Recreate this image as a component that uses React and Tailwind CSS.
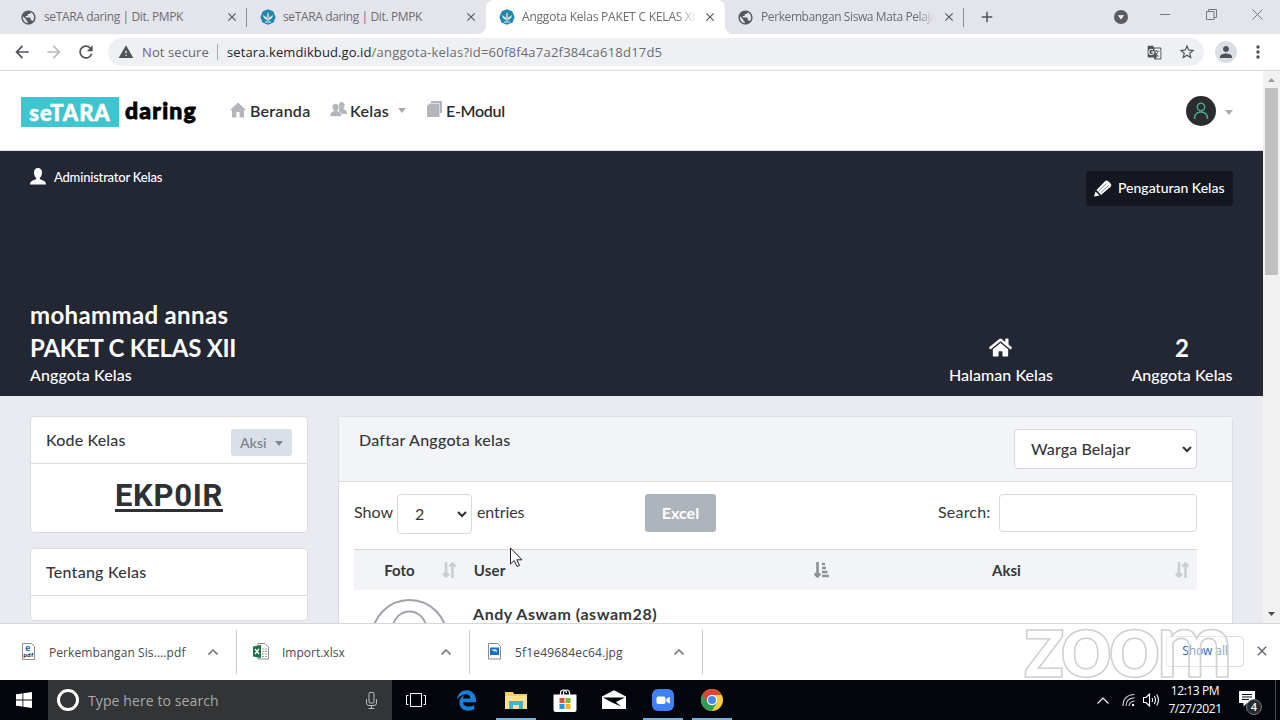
import React from "react";
import {
    MdPublic, MdClose, MdAdd, MdArrowBack, MdArrowForward, MdRefresh, MdWarning,
    MdGTranslate, MdStarBorder, MdPerson, MdMoreVert,
} from "react-icons/md";
import { FaHome } from "react-icons/fa";
import { FaEdgeLegacy } from "react-icons/fa6";

/* ---------- Chrome ---------- */

const KemdikbudIcon = () => (
    <svg width="16" height="16" viewBox="0 0 16 16">
        <path d="M8 .3l5.200 2L15.600 8l-2 5.400L8 15.700l-5.600-2.300L.4 8l2.400-5.700z" fill="#1f86ae" />
        <path d="M2.800 6l4 2.500L7 5.500 8 3l1 2.500.2 3L13.200 6q-.5 3.500-3.200 4.500L8 12l-2-1.500Q3.300 9.500 2.800 6z" fill="#cfe8f1" />
        <path d="M8 4v7" stroke="#c98a6a" strokeWidth="1" />
        <path d="M5 13h6" stroke="#e9f4f7" strokeWidth="1" />
    </svg>
);

const tabs = [
    { title: "seTARA daring | Dit. PMPK", icon: "globe", tracking: "tracking-[-0.37px]" },
    { title: "seTARA daring | Dit. PMPK", icon: "kemdikbud", tracking: "tracking-[-0.37px]" },
    { title: "Anggota Kelas PAKET C KELAS XII", icon: "kemdikbud", active: true, tracking: "tracking-[-0.2px]" },
    { title: "Perkembangan Siswa Mata Pelajaran", icon: "globe", tracking: "tracking-[-0.4px]" },
];

const Tab = ({ title, icon, active, tracking, divider }) => (
    <div className={`relative flex h-[34px] w-[239px] items-center pl-[12px] ${active ? "rounded-t-lg bg-white" : ""}`}>
        {active && (
            <>
                <svg className="absolute -left-[8px] bottom-0" width="8" height="8"><path d="M8 0v8H0a8 8 0 008-8z" fill="#fff" /></svg>
                <svg className="absolute -right-[8px] bottom-0" width="8" height="8"><path d="M0 0v8h8a8 8 0 01-8-8z" fill="#fff" /></svg>
            </>
        )}
        <span className="flex w-[17px] shrink-0 justify-center">
            {icon === "globe" ? <MdPublic size={17} className="text-[#55575d]" /> : <KemdikbudIcon />}
        </span>
        <span className={`ml-[7px] w-[175px] overflow-hidden whitespace-nowrap text-[12px] text-[#6b6d73] ${tracking} ${title.length > 26 ? "[mask-image:linear-gradient(to_right,#000_155px,transparent_175px)]" : ""}`}>
            {title}
        </span>
        <MdClose size={14} className="ml-[6px] shrink-0 text-[#55575d]" />
        {divider && <span className="absolute right-0 top-[8px] h-[19px] w-px bg-[#8c8e95]" />}
    </div>
);

const TabStrip = () => (
    <div className="flex h-[34px] items-center bg-[#e4e5eb] pl-[8px]">
        {tabs.map((tab, i) => (
            <Tab key={i} {...tab} divider={i === 0 || i === 3} />
        ))}
        <MdAdd size={18} className="ml-[14px] text-[#505258]" />
        <div className="ml-auto flex items-center pr-[17px] text-[#77797f]">
            <svg width="14" height="14" viewBox="0 0 14 14">
                <circle cx="7" cy="7" r="7" fill="#5a5c62" />
                <path d="M3.800 5.200h6.400L7 9.500z" fill="#fff" />
            </svg>
            <svg className="mb-[4px] ml-[32px]" width="10" height="12"><path d="M0 5.500h10" stroke="currentColor" /></svg>
            <svg className="mb-[5px] ml-[36px]" width="11" height="11" fill="none" stroke="currentColor">
                <path d="M.5 2.500h7.500v8H.5zM2.500 2.500v-2h8v8H8" />
            </svg>
            <svg className="mb-[5px] ml-[35px]" width="11" height="11" stroke="currentColor"><path d="M.5.5l10 10M10.500.5l-10 10" /></svg>
        </div>
    </div>
);

const Toolbar = () => (
    <div className="flex h-[37px] items-center border-b border-[#d6d7db] bg-white pl-[12px] pr-[12px] text-[#505258]">
        <MdArrowBack size={20} />
        <MdArrowForward size={20} className="ml-[12px] text-[#b9babd]" />
        <MdRefresh size={20} className="ml-[12px]" />
        <div className="ml-[12px] flex h-[28px] w-[1096px] items-center rounded-full bg-[#eff0f4] pl-[10px] pr-[9px] text-[14px]">
            <MdWarning size={16} />
            <span className="ml-[8px] w-[67px] whitespace-nowrap pt-px text-[13px] tracking-[0.1px] text-[#66686d]">Not secure</span>
            <span className="ml-[8px] h-[16px] w-px bg-[#a5a7ac]" />
            <span className="ml-[9px] whitespace-nowrap pt-px text-[13px] tracking-[0.22px] text-[#6a6c71]">
                <span className="tracking-[0.1px] text-[#222327]">setara.kemdikbud.go.id</span>/anggota-kelas?id=60f8f4a7a2f384ca618d17d5
            </span>
            <MdGTranslate size={15} className="ml-auto" />
            <MdStarBorder size={18} className="-mr-px ml-[16px]" />
        </div>
        <span className="ml-[11px] flex h-[22px] w-[22px] shrink-0 items-center justify-center rounded-full bg-[#dcdee5]">
            <MdPerson size={18} />
        </span>
        <MdMoreVert size={20} className="ml-[11px]" />
    </div>
);

/* ---------- Halaman ---------- */

const Caret = ({ className }) => (
    <svg className={className} width="8" height="5" viewBox="0 0 8 5" fill="currentColor"><path d="M0 0h8L4 5z" /></svg>
);

const Chevron = () => (
    <svg width="10" height="7" viewBox="0 0 10 7" fill="none" stroke="#303236" strokeWidth="2"><path d="M1 1l4 4 4-4" /></svg>
);

const Header = () => (
    <header className="flex h-[80px] items-center border-b border-[#d5dadd] bg-white pl-[21px] pr-[30px] text-[#2c2d30]">
        <span className="mt-[2px] flex h-[30px] w-[98px] items-center justify-center bg-[#3ec5d0] pt-px text-[22px] font-black tracking-[0.9px] text-white [-webkit-text-stroke:0.5px_#fff]">seTARA</span>
        <span className="ml-[6px] w-[73px] whitespace-nowrap text-[23px] font-black tracking-[1.2px] text-black [-webkit-text-stroke:0.8px_#000]">daring</span>
        <nav className="ml-[32px] flex items-center text-[16px] font-semibold">
            <svg className="mb-[2px]" width="16" height="16" viewBox="0 0 16 16" fill="#b4b6bc"><path d="M8 .5L16 8h-2v7.500H9.500V10h-3v5.500H2V8H0z" /></svg>
            <span className="ml-[4px] w-[60px] tracking-[0.25px]">Beranda</span>
            <svg className="mb-[2px] ml-[20px]" width="17" height="15" viewBox="0 0 17 15" fill="#b4b6bc">
                <path d="M11.500 0c2 0 3.200 1.300 3.200 3.200 0 1.300-.5 2.300-1.200 3v1c2.300.7 3.500 1.300 3.500 4.800h-5l-3-2V3C9 1 10 0 11.500 0z" />
                <path d="M5.500 1.500C7.700 1.500 9 2.900 9 5c0 1.400-.6 2.500-1.300 3.200v1c2.700.8 4.100 1.800 4.100 5.300H0c0-3.500 1.200-4.500 3.500-5.300v-1C2.700 7.500 2.100 6.400 2.100 5c0-2.100 1.300-3.500 3.400-3.500z" stroke="#fff" strokeWidth=".6" />
            </svg>
            <span className="ml-[3px] w-[40px] tracking-[0.3px]">Kelas</span>
            <Caret className="ml-[8px] text-[#a9abb0]" />
            <svg className="mb-[3px] ml-[21px]" width="15" height="16" viewBox="0 0 15 16">
                <path d="M4 0h11v12h-2V2H4z" fill="#b4b6bc" />
                <path d="M2.500 2.500h10V16H0V5z" fill="#b4b6bc" />
            </svg>
            <span className="ml-[4px] tracking-[-0.3px]">E-Modul</span>
        </nav>
        <span className="ml-auto flex h-[30px] w-[30px] items-center justify-center rounded-full bg-[#2b2c2f]">
            <svg width="16" height="18" viewBox="0 0 16 18" fill="none" stroke="#4aa590" strokeWidth="1.500">
                <circle cx="8" cy="5" r="3.700" />
                <path d="M1.500 17c0-4.500 2.500-7 6.500-7s6.500 2.500 6.500 7" />
            </svg>
        </span>
        <Caret className="ml-[9px] mt-[3px] text-[#a9abb0]" />
    </header>
);

const Hero = () => (
    <section className="flex h-[245px] flex-col justify-between bg-[#232733] pb-[10px] pl-[30px] pr-[30px] text-white">
        <div className="flex items-start justify-between">
            <div className="flex items-center pt-[15px] text-[13px]">
                <svg width="16" height="17" viewBox="0 0 16 17" fill="#fff">
                    <path d="M8 0c2.500 0 4 1.600 4 4.500C12 7 11 9 9.800 10v1.200c3 .9 6.200 1.800 6.200 5.300H0c0-3.500 3.200-4.400 6.200-5.300V10C5 9 4 7 4 4.500 4 1.600 5.500 0 8 0z" />
                </svg>
                <span className="ml-[8px] mt-[2px] font-medium tracking-[-0.2px]">Administrator Kelas</span>
            </div>
            <div className="mt-[20px] flex h-[35px] w-[147px] items-center rounded-[3px] bg-[#141720] pl-[8px] text-[14px] font-medium">
                <svg width="18" height="17" viewBox="0 0 18 17">
                    <path d="M11.500.8Q13 0 14.500 1.500l2 2Q18 5 16.800 6.500L7 15 2.500 10z" fill="#fff" />
                    <path d="M1.500 11.500l4 4L0 16.500z" fill="#fff" />
                    <path d="M4.500 11l8-7.500M6.500 13l8-7.500" stroke="#141720" strokeWidth=".5" />
                </svg>
                <span className="mb-[2px] ml-[6px] whitespace-nowrap">Pengaturan Kelas</span>
            </div>
        </div>
        <div className="flex items-end justify-between">
            <div>
                <h1 className="text-[24px] font-bold leading-[33px] tracking-[0.35px]">mohammad annas</h1>
                <h2 className="text-[24px] font-bold leading-[33px] tracking-[-0.25px]">PAKET C KELAS XII</h2>
                <p className="text-[16px] font-medium leading-[22px] tracking-[0.1px]">Anggota Kelas</p>
            </div>
            <div className="flex text-center text-[16px] font-medium leading-[22px] tracking-[0.05px]">
                <div className="flex w-[104px] flex-col items-center whitespace-nowrap">
                    <span className="flex h-[33px] items-center pr-px"><FaHome size={23} /></span>
                    Halaman Kelas
                </div>
                <div className="ml-[78px] w-[102px] whitespace-nowrap">
                    <span className="block text-[24px] font-bold leading-[33px]">2</span>
                    Anggota Kelas
                </div>
            </div>
        </div>
    </section>
);

const SortBoth = ({ className }) => (
    <svg className={className} width="14" height="16" viewBox="0 0 14 16" fill="none" stroke="#cbcdd2" strokeWidth="2.600">
        <path d="M4 0v14M1 11.500l3 3 3-3M10.500 16V2M7.500 4.500l3-3 3 3" />
    </svg>
);

const SortAsc = ({ className }) => (
    <svg className={className} width="15" height="16" viewBox="0 0 15 16" fill="none" stroke="#8f9196" strokeWidth="2.600">
        <path d="M3.500 0v14M.7 11.500l2.800 3 2.800-3" />
        <path d="M8 2h3M8 6h4M8 10h5.500M8 14h7" />
    </svg>
);

const Sidebar = () => (
    <aside className="flex w-[278px] flex-col gap-[15px] text-[16px] font-medium">
        <div className="h-[117px] rounded-[4px] border border-[#d9dce2] bg-white">
            <div className="flex h-[47px] items-center justify-between border-b border-[#d9dce2] pl-[15px] pr-[15px]">
                <span className="mb-px tracking-[0.15px]">Kode Kelas</span>
                <span className="mt-[5px] flex h-[27px] w-[61px] items-center rounded-[3px] bg-[#dbe0e8] pl-[9px] text-[14px] font-semibold text-[#80868f]">
                    Aksi<Caret className="ml-auto mr-[9px] mt-[2px]" />
                </span>
            </div>
            <p className="flex h-[64px] items-center justify-center font-['Roboto',sans-serif] text-[31px] font-bold tracking-[0.7px] text-[#2f3033] underline decoration-[3px] underline-offset-[3px]">EKP0IR</p>
        </div>
        <div className="h-[73px] rounded-[4px] border border-[#d9dce2] bg-white">
            <div className="flex h-[47px] items-center border-b border-[#d9dce2] pb-px pl-[15px] tracking-[0.25px]">Tentang Kelas</div>
        </div>
    </aside>
);

const MemberPanel = () => (
    <main className="h-[260px] w-[895px] rounded-t-[4px] border border-[#dcdee3] bg-white">
        <div className="flex h-[65px] justify-between border-b border-[#dcdee3] bg-[#f3f4f8] pl-[20px] pr-[35px] pt-[12px] text-[16px] font-medium">
            <span className="leading-[21px] tracking-[0.25px]">Daftar Anggota kelas</span>
            <div className="flex h-[40px] w-[183px] items-center justify-between rounded-[4px] border border-[#d5d8de] bg-white pl-[16px] pr-[4px] tracking-[0.1px]">
                Warga Belajar<Chevron />
            </div>
        </div>
        <div className="flex h-[67px] items-start pl-[15px] pr-[35px] pt-[12px] text-[16px]">
            <span className="w-[43px] leading-[36px]">Show</span>
            <div className="flex h-[40px] w-[75px] items-center justify-between rounded-[4px] border border-[#d5d8de] pl-[17px] pr-[4px]">
                2<Chevron />
            </div>
            <span className="ml-[5px] leading-[36px] tracking-[-0.1px]">entries</span>
            <div className="ml-auto flex h-[38px] w-[71px] items-center justify-center rounded-[3px] bg-[#adb4bc] font-bold text-white">Excel</div>
            <span className="ml-[222px] w-[53px] whitespace-nowrap leading-[35px] tracking-[0.2px]">Search:</span>
            <div className="ml-[8px] h-[38px] w-[198px] rounded-[4px] border border-[#d5d8de]" />
        </div>
        <div className="ml-[15px] flex h-[41px] w-[843px] items-center border-t border-[#d5d8de] bg-[#f3f4f8] text-[15px] font-bold">
            <span className="w-[88px] pl-[3px] text-center">Foto</span>
            <SortBoth />
            <span className="ml-[18px] w-[341px] tracking-[0.2px]">User</span>
            <SortAsc />
            <span className="w-[347px] pl-[9px] text-center">Aksi</span>
            <SortBoth className="ml-auto mr-[8px]" />
        </div>
        <div className="flex pl-[34px]">
            <svg width="78" height="78" viewBox="0 0 78 78" className="mt-[9px]" fill="none" stroke="#9ea2a9" strokeWidth="2">
                <circle cx="36.500" cy="38.500" r="37.500" />
                <circle cx="36.500" cy="29" r="16.500" />
            </svg>
            <span className="ml-[22px] mt-[12px] text-[16px] font-bold leading-[24px] tracking-[0.54px]">Andy Aswam (aswam28)</span>
        </div>
    </main>
);

const Scrollbar = () => (
    <div className="flex h-[552px] w-[17px] flex-col items-center justify-between bg-[#f1f1f2] pb-[7px] pt-[7px]">
        <div className="flex flex-col items-center gap-[6px]">
            <svg width="7" height="4"><path d="M0 4h7L3.500 0z" fill="#9c9da0" /></svg>
            <div className="h-[187px] w-[13px] bg-[#c0c0c2]" />
        </div>
        <svg width="7" height="4"><path d="M0 0h7L3.500 4z" fill="#4c4d50" /></svg>
    </div>
);

/* ---------- Downloads ---------- */

const UpChevron = ({ color }) => (
    <svg width="10" height="6" viewBox="0 0 10 6" fill="none" stroke={color} strokeWidth="1.600"><path d="M.5 5.500L5 1l4.500 4.500" /></svg>
);

const PdfIcon = () => (
    <svg width="13" height="17" viewBox="0 0 13 17" className="overflow-visible">
        <path d="M.5.5h9l3 3v13H.5z" fill="#fff" stroke="#8b8d92" />
        <text x="3" y="7.500" fontSize="9" fontWeight="700" fill="#1877c9" fontFamily="Open Sans, sans-serif">e</text>
        <text x="1.300" y="13.500" fontSize="6" fontWeight="700" fill="#333" fontFamily="Open Sans, sans-serif">pdf</text>
    </svg>
);

const XlsIcon = () => (
    <svg width="16" height="17" viewBox="0 0 16 17">
        <path d="M5 .5h7l3.500 3.500v12H5z" fill="#fff" stroke="#8b8d92" />
        <path d="M9 6h2M12 6h2M9 8.500h2M12 8.500h2M9 11h2M12 11h2M9 13.500h2M12 13.500h2" stroke="#9a9ca0" />
        <path d="M0 3.500l8-1.500v13l-8-1.500z" fill="#217346" />
        <path d="M2 6l4 5M6 6l-4 5" stroke="#fff" strokeWidth="1.300" />
    </svg>
);

const JpgIcon = () => (
    <svg width="13" height="17" viewBox="0 0 13 17">
        <path d="M.5.5h9l3 3v12.500H.5z" fill="#fff" stroke="#8b8d92" />
        <path d="M2 4.500h9v7.500H2z" fill="#1471bd" />
        <path d="M3 6.500h5.500l.5 3-1.500-1.500-1 .8L5 7.500z" fill="#e4f3fc" />
    </svg>
);

const downloads = [
    { name: "Perkembangan Sis....pdf", icon: <PdfIcon />, width: "w-[237px]", pad: "pl-[22px]", gap: "ml-[14px]", tracking: "tracking-[0.08px]" },
    { name: "Import.xlsx", icon: <XlsIcon />, width: "w-[233px]", pad: "pl-[16px]", gap: "ml-[13px]", tracking: "tracking-normal" },
    { name: "5f1e49684ec64.jpg", icon: <JpgIcon />, width: "w-[233px]", pad: "pl-[18px]", gap: "ml-[14px]", tracking: "tracking-[0.16px]" },
];

const DownloadBar = () => (
    <div className="relative flex h-[57px] items-center border-t border-[#d6d7db] bg-white">
        {downloads.map((d) => (
            <div key={d.name} className={`flex h-[44px] items-center border-r border-[#c9cacd] pr-[18px] ${d.width} ${d.pad}`}>
                <span className="mb-[2px]">{d.icon}</span>
                <span className={`mt-[2px] whitespace-nowrap text-[12px] text-[#47494e] ${d.gap} ${d.tracking}`}>{d.name}</span>
                <span className="ml-auto"><UpChevron color="#77797f" /></span>
            </div>
        ))}
        <div className="mb-[2px] ml-auto flex h-[31px] w-[78px] items-center justify-center rounded-[4px] border border-[#dadbdf] text-[12px] tracking-[-0.1px] text-[#3464b4]">Show all</div>
        <MdClose size={16} className="mb-[2px] ml-[10px] mr-[10px] text-[#606268]" />
        {/* watermark */}
        <span className="pointer-events-none absolute left-[1023px] top-[-32px] whitespace-nowrap font-['Lato',sans-serif] text-[92px] font-bold leading-[100px] tracking-[-4.7px] text-white/40 [-webkit-text-stroke:1.6px_#cfd0d2]">zoom</span>
    </div>
);

/* ---------- Taskbar ---------- */

const ExplorerIcon = () => (
    <svg width="22" height="18" viewBox="0 0 22 18">
        <path d="M0 1h8l1 2h13v15H0z" fill="#f0cf6a" />
        <path d="M0 5h22v13H0z" fill="#fbe190" />
        <path d="M4 18v-8h14v8h-4v-4H8v4z" fill="#47b1c7" />
    </svg>
);

const StoreIcon = () => (
    <svg width="24" height="23" viewBox="0 0 24 23">
        <path d="M7.500 6V4q0-3 3-3t3 3M10.500 6V3.500q0-2.500 3-2.500t3 3V6" fill="none" stroke="#fff" strokeWidth="1.200" />
        <path d="M.5 5.500h23V21q0 2-2 2h-19q-2 0-2-2z" fill="#fff" />
        <path d="M6.500 9h5v5h-5z" fill="#e5512b" /><path d="M12.500 9h5v5h-5z" fill="#7db62f" />
        <path d="M6.500 15h5v5h-5z" fill="#2597dd" /><path d="M12.500 15h5v5h-5z" fill="#f4b521" />
    </svg>
);

const MailIcon = () => (
    <svg width="24" height="20" viewBox="0 0 24 20">
        <path d="M0 6.500L12 .3l12 6.200V19H0z" fill="#fff" />
        <path d="M1 7.500h22l-9 4.500 5 4.500L9 12z" fill="#03050c" />
    </svg>
);

const ZoomIcon = () => (
    <svg width="22" height="22" viewBox="0 0 22 22">
        <rect width="22" height="22" rx="6" fill="#3f82f5" />
        <rect x="4.500" y="7.500" width="9" height="7.500" rx="1.700" fill="#fff" />
        <path d="M14.300 10l3.500-2.300v7L14.300 12.500z" fill="#fff" />
    </svg>
);

const ChromeIcon = () => (
    <svg width="22" height="22" viewBox="0 0 22 22">
        <circle cx="11" cy="11" r="11" fill="#f9cd3c" />
        <path d="M11 11L1.500 5.500A11 11 0 0011 22l4.800-8.300z" fill="#2f9e55" />
        <path d="M11 0a11 11 0 019.500 6H11v5l-4.500 2.500-5-8A11 11 0 0111 0z" fill="#dc4537" />
        <circle cx="11" cy="11" r="5.200" fill="#fff" />
        <circle cx="11" cy="11" r="4" fill="#4a87ee" />
    </svg>
);

const apps = [
    {
        name: "taskview",
        icon: (
            <svg className="-ml-[3px]" width="20" height="14" viewBox="0 0 20 14" fill="none" stroke="#fff">
                <path d="M4.500.5h11v13h-11zM2.500 2.500h-2v9h2M17.500 2.500h2v9h-2" />
            </svg>
        ),
    },
    { name: "edge", icon: <FaEdgeLegacy size={21} className="text-[#1680d8]" /> },
    { name: "explorer", icon: <ExplorerIcon />, open: true },
    { name: "store", icon: <StoreIcon /> },
    { name: "mail", icon: <MailIcon /> },
    { name: "zoom", icon: <ZoomIcon />, open: true },
    { name: "chrome", icon: <ChromeIcon />, open: true },
];

const Taskbar = () => (
    <div className="flex h-[40px] items-center bg-[#03050c] font-['Open_Sans','Noto_Sans',sans-serif] text-white">
        <div className="flex w-[48px] justify-center">
            <svg width="16" height="16" viewBox="0 0 16 16" fill="#fff">
                <path d="M0 2.300l6.500-.9v6.100H0zM7.300 1.300L16 0v7.500H7.300zM0 8.400h6.500v6.200L0 13.700zM7.300 8.400H16V16l-8.700-1.300z" />
            </svg>
        </div>
        <div className="flex h-full w-[344px] items-center bg-[#333435] pl-[9px] pr-[15px]">
            <span className="h-[22px] w-[22px] rounded-full border-[3px] border-white" />
            <span className="ml-[9px] text-[14px] tracking-[0.1px] text-[#a8a9ab]">Type here to search</span>
            <svg className="ml-auto" width="11" height="17" viewBox="0 0 11 17" fill="none" stroke="#b9babc">
                <rect x="3" y=".5" width="5" height="10.500" rx="1" />
                <path d="M.5 7v4q0 2.500 2.500 2.500h5q2.500 0 2.500-2.500V7M5.500 13.500v3M2.500 16.500h6" />
            </svg>
        </div>
        {apps.map((app) => (
            <div key={app.name} className="relative flex h-full w-[49px] items-center justify-center pl-[2px]">
                {app.icon}
                {app.open && <span className="absolute bottom-0 left-[6px] h-[2px] w-[40px] bg-[#7ab0dd]" />}
            </div>
        ))}
        <div className="ml-auto flex h-full items-center">
            <svg width="12" height="7" viewBox="0 0 12 7" fill="none" stroke="#fff" strokeWidth="1.200"><path d="M.5 6.500L6 1l5.500 5.500" /></svg>
            <svg className="ml-[13px]" width="13" height="14" viewBox="0 0 13 14" fill="none" stroke="#d5d6d8" strokeWidth="1.100">
                <path d="M1 13Q1 2 12.500 1.500M4 13Q4 5.500 12.500 4.800M7 13Q7.500 8.500 12.500 8" />
                <circle cx="11" cy="12" r="1.200" fill="#fff" stroke="none" />
            </svg>
            <svg className="ml-[8px]" width="17" height="14" viewBox="0 0 17 14" fill="none" stroke="#fff" strokeWidth="1.100">
                <path d="M.5 4.500h2.500L6.500 1v12L3 9.500H.5zM9 5q1.200 2 0 4M11.300 3q2.500 4 0 8M13.700 1.500q3.500 5.500 0 11" />
            </svg>
            <div className="ml-[8px] w-[54px] whitespace-nowrap text-center text-[12px] leading-[18px] tracking-[-0.4px]">
                <div>12:13 PM</div>
                <div>7/27/2021</div>
            </div>
            <div className="relative ml-[17px] mr-[12px] h-[18px] w-[24px]">
                <svg width="17" height="17" viewBox="0 0 17 17"><path d="M0 0h16v12H8l-3.500 3.500V12H0z" fill="#fff" /><path d="M3 3.500h10M3 6h10M3 8.500h7" stroke="#03050c" /></svg>
                <span className="absolute left-[7px] top-[8px] flex h-[16px] w-[16px] items-center justify-center rounded-full border border-[#77797e] bg-[#28292d] text-[11px] font-semibold">4</span>
            </div>
            <span className="mr-[4px] h-full w-px bg-[#4a4b50]" />
        </div>
    </div>
);

const App = () => {
    return (
        <div className="relative h-[720px] w-[1280px] overflow-hidden bg-white font-['Open_Sans','Noto_Sans',sans-serif]">
            <TabStrip />
            <Toolbar />
            <div className="flex h-[552px] overflow-hidden">
                <div className="w-[1263px] bg-[#eaebf1] font-['Lato',sans-serif] text-[#35373b]">
                    <Header />
                    <Hero />
                    <div className="flex items-start gap-[30px] pl-[30px] pt-[20px]">
                        <Sidebar />
                        <MemberPanel />
                    </div>
                </div>
                <Scrollbar />
            </div>
            <DownloadBar />
            <Taskbar />
            <svg className="absolute left-[510px] top-[547px]" width="13" height="21" viewBox="0 0 13 21">
                <path d="M.5 1v16l3.700-3.500L7 19.500l2.500-1-2.700-5.700h5.200z" fill="#fff" stroke="#222" />
            </svg>
        </div>
    );
};

export default App;
